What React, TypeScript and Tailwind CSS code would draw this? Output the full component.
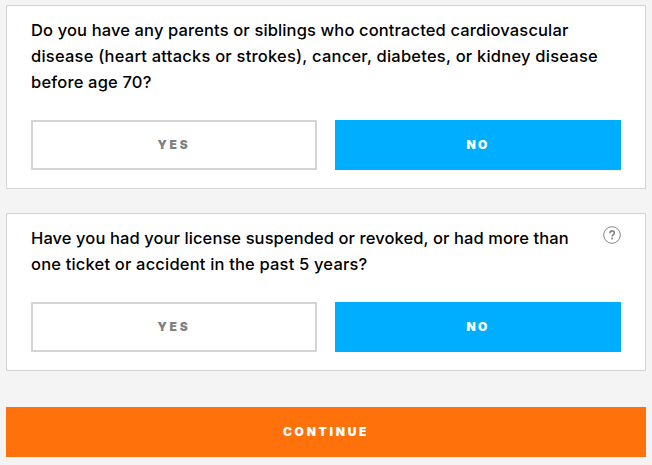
import React from 'react';
import clsx from 'clsx';

interface Line {
  text: string;
  tracking: string;
}

interface Question {
  id: string;
  lines: Line[];
  hasHelp: boolean;
}

const questions: Question[] = [
  {
    id: 'family-history',
    lines: [
      { text: 'Do you have any parents or siblings who contracted cardiovascular', tracking: 'tracking-[0.13px]' },
      { text: 'disease (heart attacks or strokes), cancer, diabetes, or kidney disease', tracking: 'tracking-[0.22px]' },
      { text: 'before age 70?', tracking: 'tracking-[0.18px]' }
    ],
    hasHelp: false
  },
  {
    id: 'driving-record',
    lines: [
      { text: 'Have you had your license suspended or revoked, or had more than', tracking: 'tracking-[0.09px]' },
      { text: 'one ticket or accident in the past 5 years?', tracking: 'tracking-[0.18px]' }
    ],
    hasHelp: true
  }
];

const HelpIcon: React.FC = () => (
  <svg className="w-[18px] h-[18px] shrink-0 mt-[9px]" viewBox="0 0 18 18" fill="none" stroke="#858585">
    <circle cx="9" cy="9" r="8.3" strokeWidth="1" />
    <path d="M6.9 7.3c0-1.6 0.9-2.4 2.2-2.4s2.2 0.8 2.2 2c0 1.6-2.1 1.7-2.1 3.5" strokeWidth="1.6" />
    <path d="M9.2 11.6v1.8" strokeWidth="1.8" />
  </svg>
);

const AnswerButton: React.FC<{ label: string; selected?: boolean }> = ({ label, selected }) => (
  <button
    type="button"
    className={clsx(
      'flex-1 h-[50px] border-2 text-[12px] font-black',
      selected
        ? 'bg-[#00aeff] border-[#00aeff] text-white tracking-[2.2px]'
        : 'bg-white border-[#d4d4d4] text-[#808080] tracking-[2.7px]'
    )}
  >
    {label}
  </button>
);

const QuestionCard: React.FC<{ question: Question }> = ({ question }) => (
  <section className="bg-white border border-[#d4d4d4] px-6 pt-[3px] pb-[18px]">
    <div className="flex justify-between">
      <h2 className="pt-2 text-[16.5px] leading-[26px] font-[550] text-black whitespace-nowrap">
        {question.lines.map((line) => (
          <span key={line.text} className="block">
            <span className={line.tracking}>{line.text}</span>
          </span>
        ))}
      </h2>
      {question.hasHelp && <HelpIcon />}
    </div>
    <div className="flex gap-[18px] mt-[25px]">
      <AnswerButton label="YES" />
      <AnswerButton label="NO" selected />
    </div>
  </section>
);

const App: React.FC = () => {
  return (
    <main className="min-h-screen bg-[#f4f4f4] px-1.5 pt-[5px] font-['Inter',sans-serif]">
      <div className="flex flex-col gap-6">
        {questions.map((question) => (
          <QuestionCard key={question.id} question={question} />
        ))}
      </div>
      <button
        type="button"
        className="block w-full h-[50px] mt-9 bg-[#ff710b] text-white text-[12px] font-black tracking-[2.7px]"
      >
        CONTINUE
      </button>
    </main>
  );
};

export default App;
